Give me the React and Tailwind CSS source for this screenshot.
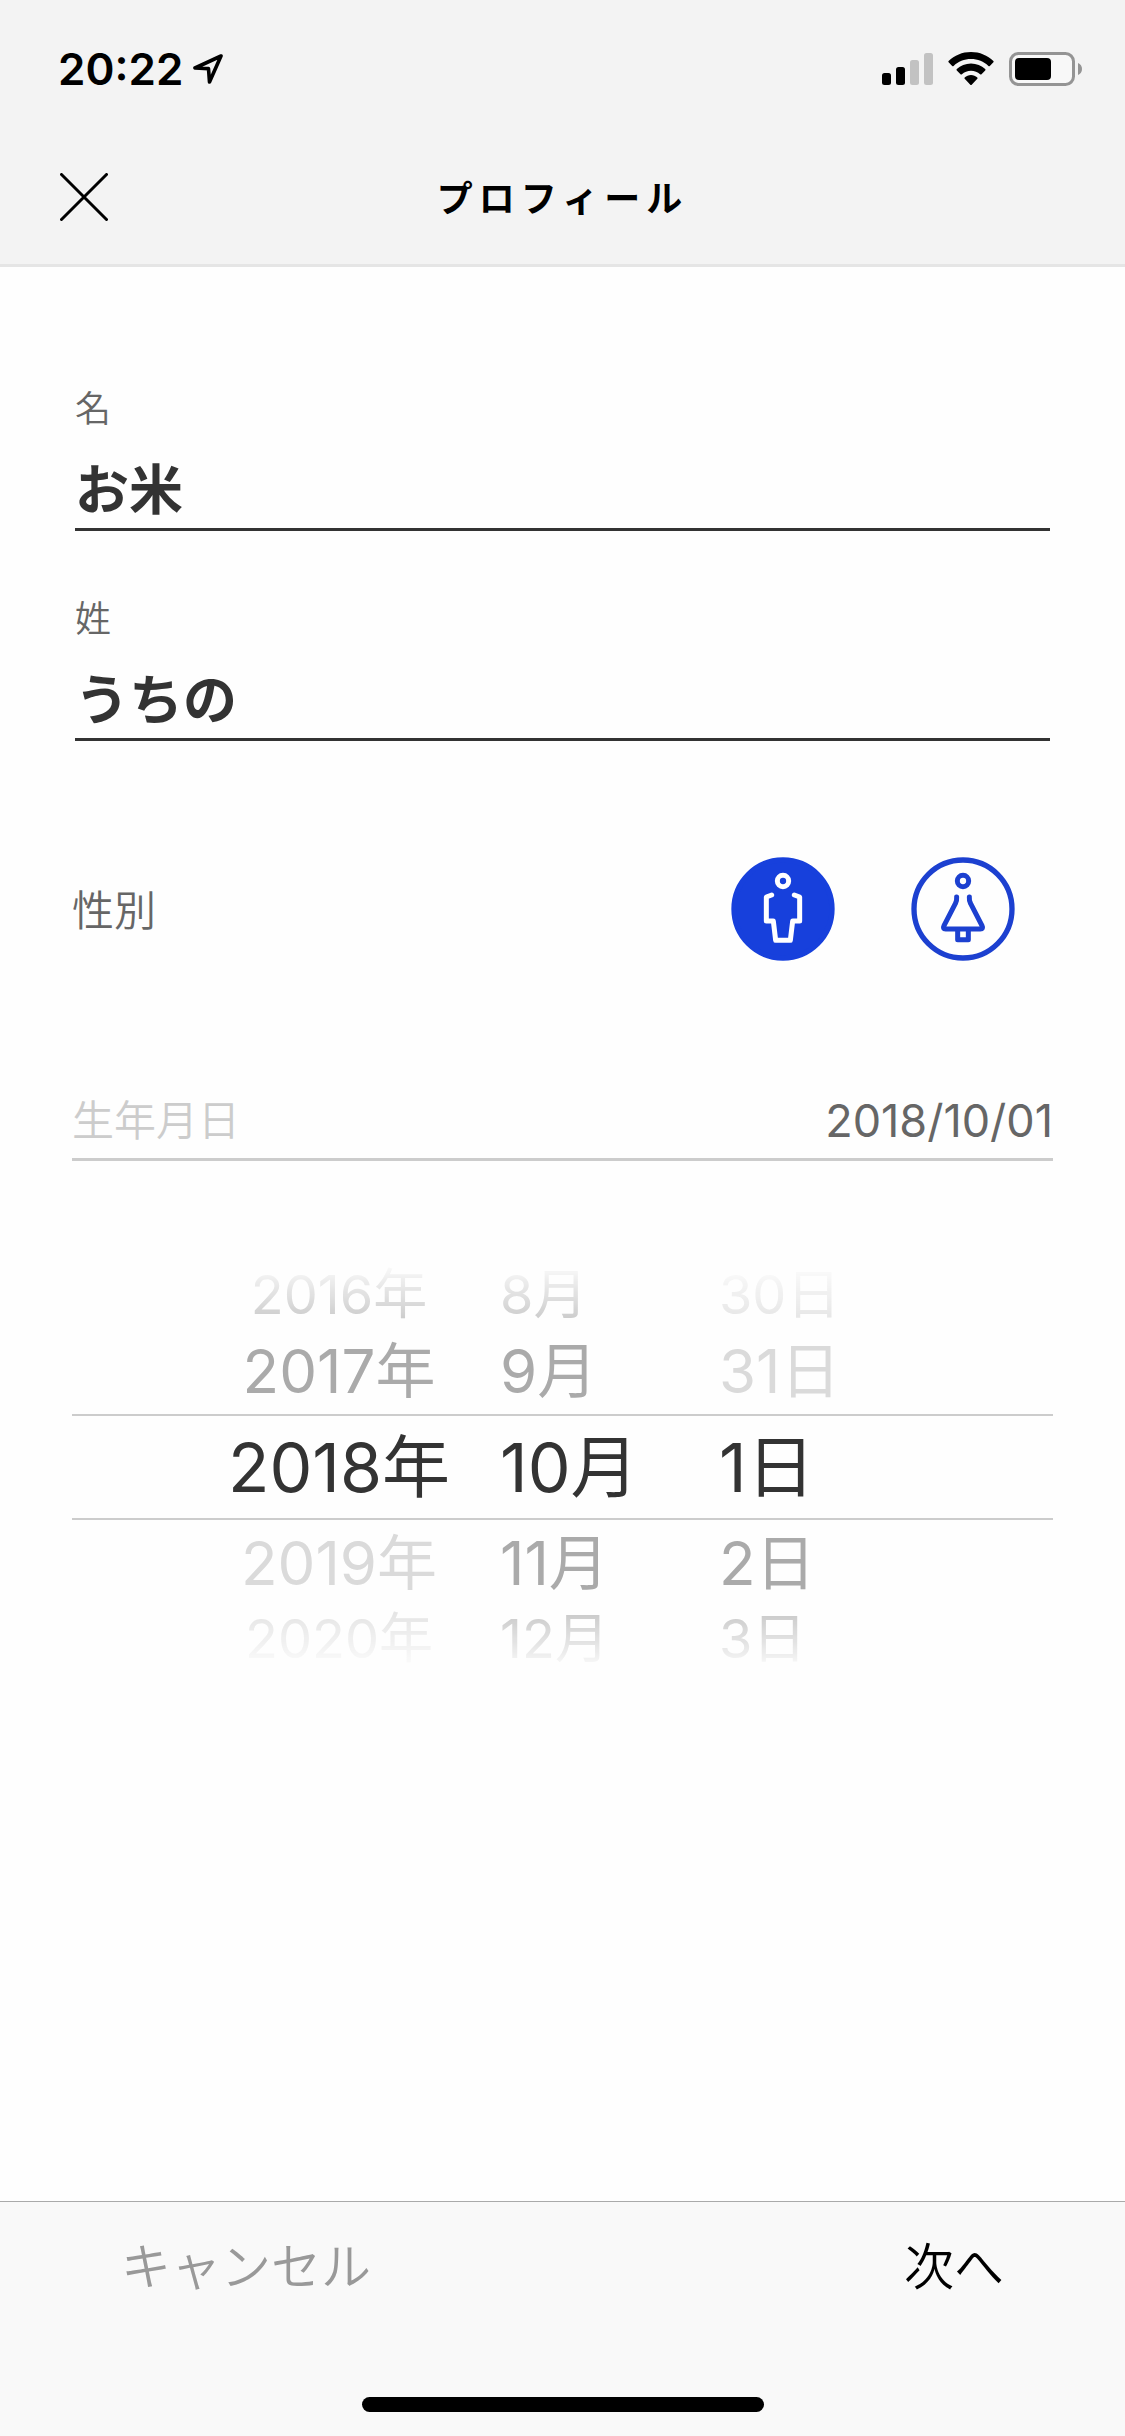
import { useState } from "react";

function LocationArrow() {
  return (
    <svg viewBox="0 0 30 30" className="h-[30px] w-[30px]" fill="none" stroke="#000" strokeWidth="3.6" strokeLinejoin="round" aria-hidden="true">
      <path d="M28 2 L2 14 L15.5 14.6 L16.5 28 Z" />
    </svg>
  );
}

function SignalIcon() {
  return (
    <svg viewBox="0 0 51 34" className="h-[34px] w-[51px]" aria-hidden="true">
      <rect x="0" y="21" width="9" height="12" rx="2.5" />
      <rect x="14" y="15" width="9" height="18" rx="2.5" />
      <rect x="28" y="8" width="9" height="25" rx="2.5" fill="#c2c2c2" />
      <rect x="42" y="1" width="9" height="32" rx="2.5" fill="#c2c2c2" />
    </svg>
  );
}

function WifiIcon() {
  return (
    <svg viewBox="0 0 46 34" className="h-[34px] w-[46px]" aria-hidden="true">
      <path d="M23 0 C14.3 0 6.4 3.400 0.600 9 Q0 9.600 0.600 10.300 L4.200 14 Q4.900 14.600 5.600 14 C10.200 9.700 16.300 7.100 23 7.100 C29.700 7.100 35.800 9.700 40.400 14 Q41.100 14.600 41.800 14 L45.400 10.300 Q46 9.600 45.400 9 C39.600 3.400 31.700 0 23 0 Z" />
      <path d="M23 11.500 C17.500 11.500 12.500 13.600 8.800 17.100 Q8.100 17.800 8.800 18.500 L12.500 22.200 Q13.200 22.800 13.900 22.200 C16.300 20 19.500 18.700 23 18.700 C26.500 18.700 29.700 20 32.100 22.200 Q32.800 22.800 33.500 22.200 L37.200 18.500 Q37.900 17.800 37.200 17.100 C33.500 13.600 28.500 11.500 23 11.500 Z" />
      <path d="M23 23 C20.600 23 18.400 23.900 16.700 25.400 Q16 26.100 16.700 26.800 L22.300 32.700 Q23 33.400 23.700 32.700 L29.300 26.800 Q30 26.100 29.300 25.400 C27.600 23.900 25.400 23 23 23 Z" />
    </svg>
  );
}

function BatteryIcon() {
  return (
    <svg viewBox="0 0 73 34" className="h-[34px] w-[73px]" aria-hidden="true">
      <rect x="1.500" y="1.500" width="63" height="31" rx="8" fill="#f8f8f8" stroke="#949494" strokeWidth="3" />
      <rect x="6" y="6" width="36" height="22" rx="4" />
      <path d="M69 11 C71.500 12 73 14.300 73 17 C73 19.700 71.500 22 69 23 Z" fill="#949494" />
    </svg>
  );
}

function MaleIcon({ active }) {
  const ink = active ? "#fff" : "#1c40d0";
  return (
    <svg viewBox="0 0 312 312" className="size-[104px]" fill="none" aria-hidden="true">
      <circle cx="156" cy="156" r="147" fill={active ? "#1740dc" : "none"} stroke={active ? "#1740dc" : "#1c40d0"} strokeWidth="16" />
      <g stroke={ink} strokeWidth="15" strokeLinecap="round" strokeLinejoin="round">
        <circle cx="156" cy="72" r="17" />
        <path d="M122 114 L106 120 V192 H127 L134 250 H178 L185 192 H206 V120 L190 114" />
      </g>
    </svg>
  );
}

function FemaleIcon({ active }) {
  const ink = active ? "#fff" : "#1c40d0";
  return (
    <svg viewBox="0 0 312 312" className="size-[104px]" fill="none" aria-hidden="true">
      <circle cx="156" cy="156" r="147" fill={active ? "#1740dc" : "none"} stroke={active ? "#1740dc" : "#1c40d0"} strokeWidth="16" />
      <g stroke={ink} strokeWidth="15" strokeLinecap="round" strokeLinejoin="round">
        <circle cx="156" cy="72" r="17" />
        <path d="M137 120 Q138 131 133 140 L99 206 Q94 216 104 216 H208 Q218 216 213 206 L179 140 Q174 131 175 120" />
        <path d="M140 219 V248 H172 V219" />
      </g>
    </svg>
  );
}

function NameField({ id, label, value }) {
  return (
    <div className="flex flex-col">
      <label htmlFor={id} className="text-[36px] leading-[58px] font-[350] text-[#666]">
        {label}
      </label>
      <input
        id={id}
        type="text"
        defaultValue={value}
        className="mt-[6px] h-[87px] w-full border-b-[3px] border-[#333] bg-transparent text-[54px] font-bold text-[#333] outline-none"
      />
    </div>
  );
}

const SIZES = [
  "h-[66px] text-[54px]",
  "h-[86px] text-[60px]",
  "h-[106px] border-y-2 border-[#ccc] text-[68px]",
  "h-[86px] text-[60px]",
  "h-[66px] text-[54px]",
];

const ON = ["text-[#c4c4c4]", "text-[#aaa]", "text-[#333]", "text-[#aaa]", "text-[#c4c4c4]"];
const OFF = ["text-[#e2e2e2]", "text-[#dadada]", "text-[#333]", "text-[#dadada]", "text-[#e2e2e2]"];

const COLUMNS = [
  { label: "年", items: ["2016年", "2017年", "2018年", "2019年", "2020年"], off: [3, 4], place: "justify-center pl-[106px]" },
  { label: "月", items: ["8月", "9月", "10月", "11月", "12月"], off: [], place: "justify-start" },
  { label: "日", items: ["30日", "31日", "1日", "2日", "3日"], off: [0, 1], place: "justify-start" },
];

function DatePicker() {
  return (
    <div className="mt-[101px] grid grid-cols-[428fr_219fr_334fr] [mask-image:linear-gradient(to_bottom,transparent,black_16%,black_84%,transparent)]">
      {COLUMNS.map((col) => (
        <ul key={col.label} role="listbox" aria-label={col.label}>
          {col.items.map((item, i) => (
            <li
              key={item}
              role="option"
              aria-selected={i === 2}
              aria-disabled={col.off.includes(i)}
              className={`flex items-center leading-none whitespace-nowrap ${col.place} ${SIZES[i]} ${col.off.includes(i) ? OFF[i] : ON[i]}`}
            >
              {item}
            </li>
          ))}
        </ul>
      ))}
    </div>
  );
}

export default function App() {
  const [gender, setGender] = useState("male");
  return (
    <div className="flex min-h-screen flex-col bg-[#fefefe] font-[Inter,'Noto_Sans_CJK_JP',sans-serif]" lang="ja">
      <header className="border-b-[3px] border-[#e5e5e5] bg-[#f3f3f3] pb-2">
        <div className="flex h-[138px] items-center justify-between pr-[43px] pl-[58px]">
          <div className="flex items-center gap-[10px]">
            <time className="text-[44px] leading-none font-semibold">20:22</time>
            <LocationArrow />
          </div>
          <div className="flex items-center gap-[15px]">
            <SignalIcon />
            <WifiIcon />
            <BatteryIcon />
          </div>
        </div>
        <div className="grid h-[118px] grid-cols-[1fr_auto_1fr] items-center px-[60px]">
          <button type="button" aria-label="閉じる" className="size-12">
            <svg viewBox="0 0 48 48" className="size-12" stroke="#000" strokeWidth="3" strokeLinecap="round" aria-hidden="true">
              <path d="M1.500 1.500 L46.500 46.500 M46.500 1.500 L1.500 46.500" />
            </svg>
          </button>
          <h1 className="pt-1 text-[36px] leading-none font-bold tracking-[6px]">プロフィール</h1>
        </div>
      </header>

      <main className="flex-1 px-[72px] pt-[113px]">
        <div className="flex flex-col gap-[59px] px-[3px]">
          <NameField id="given" label="名" value="お米" />
          <NameField id="family" label="姓" value="うちの" />
        </div>

        <div role="radiogroup" aria-labelledby="gender-label" className="mt-[116px] flex items-center justify-between pr-[38px]">
          <span id="gender-label" className="pt-1 text-[42px] leading-none font-[350] text-[#666]">
            性別
          </span>
          <div className="flex gap-[76px]">
            <label className="cursor-pointer">
              <input type="radio" name="gender" aria-label="男性" className="sr-only" checked={gender === "male"} onChange={() => setGender("male")} />
              <MaleIcon active={gender === "male"} />
            </label>
            <label className="cursor-pointer">
              <input type="radio" name="gender" aria-label="女性" className="sr-only" checked={gender === "female"} onChange={() => setGender("female")} />
              <FemaleIcon active={gender === "female"} />
            </label>
          </div>
        </div>

        <div className="mt-[122px] flex h-[78px] items-center justify-between border-b-[3px] border-[#ccc]">
          <label htmlFor="birthday" className="text-[42px] leading-none font-[350] whitespace-nowrap text-[#ccc]">
            生年月日
          </label>
          <input
            id="birthday"
            type="text"
            readOnly
            value="2018/10/01"
            className="min-w-0 flex-1 bg-transparent text-right text-[45px] leading-none text-[#666] outline-none"
          />
        </div>

        <DatePicker />
      </main>

      <footer className="flex h-[235px] flex-col justify-between border-t border-[#aaa] bg-[#f9f9f9] pb-6">
        <div className="flex h-[130px] items-center justify-between px-[121px]">
          <button type="button" className="text-[50px] leading-none font-[350] text-[#999]">
            キャンセル
          </button>
          <button type="button" className="text-[50px] leading-none font-[350] text-black">
            次へ
          </button>
        </div>
        <div className="h-[15px] w-[402px] self-center rounded-full bg-black" />
      </footer>
    </div>
  );
}
